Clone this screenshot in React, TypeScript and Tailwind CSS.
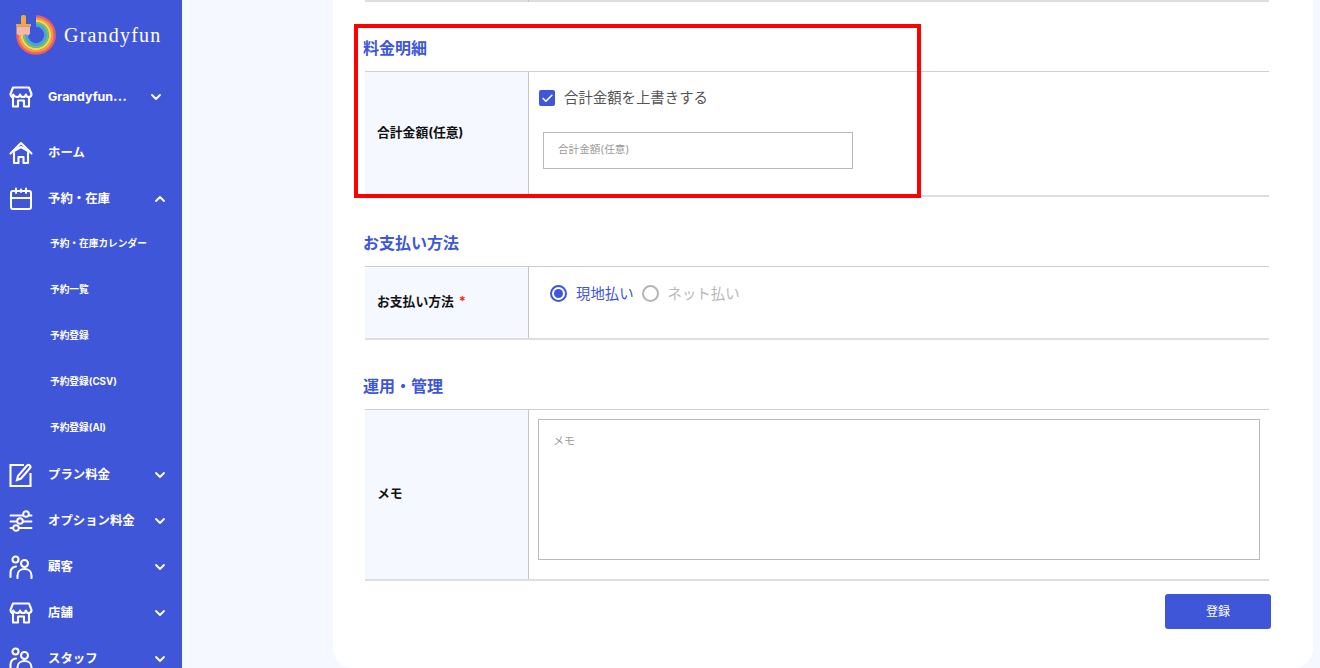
import type { ReactNode } from 'react';
import { ChevronDown, ChevronUp, Check } from 'lucide-react';

const jp = 'font-["Inter","Noto_Sans_CJK_JP",sans-serif]';

function Logo() {
  const rings = ['#f0596b', '#f59a3e', '#f7d64a', '#6cc36e', '#4aa3e0'];
  return (
    <svg width="44" height="44" viewBox="15 13 44 44" fill="none">
      {rings.map((c, i) => {
        const r = 18.6 - i * 2.3;
        return <path key={c} d={`M36 ${35 - r}A${r} ${r} 0 1 1 ${36 - r} 35`} stroke={c} strokeWidth="2.5" />;
      })}
      <rect x="21" y="15" width="5" height="10" rx="2" fill="#f2a83b" />
      <rect x="16" y="24" width="15" height="2.600" rx="0.500" fill="#f2a83b" />
      <path d="M16.500 26.600h13.500v7l-1.500 2-3-1-3 1-6-1z" fill="#f5b7a8" />
    </svg>
  );
}

function StoreIcon() {
  return (
    <svg width="24" height="24" viewBox="0 0 24 24" fill="none" stroke="white" strokeWidth="2.100" strokeLinejoin="round" strokeLinecap="round">
      <path d="M4 2.500h16l2.500 6.500c0 2-1.500 3-2.800 3s-2.600-1-2.800-2.500c-.2 1.500-1.600 2.500-2.900 2.500s-2.700-1-2.900-2.500C10.900 11 9.500 12 8.200 12S4.500 11 4.300 9.500C4 11 3.200 12 2.800 12 1.800 11.500 1.500 10 1.500 9z" />
      <path d="M4 12v9.500h5v-6h6v6h5V12" />
    </svg>
  );
}

function HomeIcon() {
  return (
    <svg width="24" height="24" viewBox="0 0 24 24" fill="none" stroke="white" strokeWidth="2.100" strokeLinejoin="round" strokeLinecap="round">
      <path d="M1.500 12.500 12 2l10.500 10.500" />
      <path d="M4 10.500 12 6l8 4.500" />
      <path d="M5 12v10h4.500v-6h5v6H19V12" />
    </svg>
  );
}

function CalendarIcon() {
  return (
    <svg width="24" height="24" viewBox="0 0 24 24" fill="none" stroke="white" strokeWidth="2" strokeLinecap="round" strokeLinejoin="round">
      <rect x="2" y="4" width="20" height="18" rx="2" />
      <path d="M2 11h20M7 1.500V6M12 2.500V5M17 1.500V6" />
    </svg>
  );
}

function EditIcon() {
  return (
    <svg width="24" height="24" viewBox="0 0 24 24" fill="none" stroke="white" strokeWidth="2.100" strokeLinejoin="miter">
      <path d="M15 2H1.500v21h20V10" />
      <path d="M8 17l1-4 9-10.500c1-.8 2-.8 2.800 0s.8 2 0 2.800L12 15.500z" />
    </svg>
  );
}

function SlidersIcon() {
  return (
    <svg width="24" height="24" viewBox="0 0 24 24" fill="none" stroke="white" strokeWidth="1.900" strokeLinecap="round">
      <path d="M1.500 6.500H14M20 6.500h2.500M1.500 12.500H8M14 12.500h8.500M1.500 19H4M10 19h12.500" />
      <circle cx="17" cy="5" r="2.800" />
      <circle cx="11" cy="12" r="2.800" />
      <circle cx="7" cy="19" r="2.800" />
    </svg>
  );
}

function PeopleIcon() {
  return (
    <svg width="24" height="24" viewBox="0 0 24 24" fill="none" stroke="white" strokeWidth="2.100" strokeLinecap="round">
      <circle cx="6.500" cy="4.500" r="3" />
      <circle cx="15.500" cy="8.500" r="3.500" />
      <path d="M1.500 22v-4c0-3.500 2-6 5.500-6.500" />
      <path d="M8.500 23v-2.500c0-4 3-6.500 7-6.500s7 2.500 7 6.500V23" />
    </svg>
  );
}

function NavRow({ icon, label, chevron, mt }: { icon: ReactNode; label: string; chevron?: 'up' | 'down'; mt?: string }) {
  return (
    <div className={`flex h-[46px] items-center pl-[9px] pr-[14px] shrink-0 ${mt ?? ''}`}>
      <span className="w-[24px] flex justify-center">{icon}</span>
      <span className="ml-[15px] flex-1 text-[12.400px] font-bold text-white whitespace-nowrap">{label}</span>
      {chevron === 'down' && <ChevronDown size={16} color="white" strokeWidth={2.800} />}
      {chevron === 'up' && <ChevronUp size={16} color="white" strokeWidth={2.800} />}
    </div>
  );
}

function SubRow({ label }: { label: string }) {
  return (
    <div className="flex h-[46px] items-center pl-[50px] pb-[1px] shrink-0 text-[9.700px] font-bold text-white whitespace-nowrap">
      {label}
    </div>
  );
}

function Sidebar() {
  return (
    <aside className="w-[182px] shrink-0 bg-[#4056d9] flex flex-col overflow-hidden">
      <div className="flex h-[70px] items-center pl-[15px] pb-[1px] shrink-0">
        <Logo />
        <span className='ml-[5px] text-[20px] tracking-[1.200px] text-white font-["Liberation_Serif",serif]'>Grandyfun</span>
      </div>
      <div className="flex h-[54px] items-center pl-[9px] pr-[18px] shrink-0">
        <span className="w-[24px] flex justify-center"><StoreIcon /></span>
        <span className="ml-[15px] flex-1 text-[12.400px] font-bold text-white whitespace-nowrap">
          Grandyfun<span className='font-["Noto_Sans_CJK_JP",sans-serif]'>…</span>
        </span>
        <ChevronDown size={16} color="white" strokeWidth={2.800} />
      </div>
      <NavRow icon={<HomeIcon />} label="ホーム" mt="mt-[6px]" />
      <NavRow icon={<CalendarIcon />} label="予約・在庫" chevron="up" />
      <SubRow label="予約・在庫カレンダー" />
      <SubRow label="予約一覧" />
      <SubRow label="予約登録" />
      <SubRow label="予約登録(CSV)" />
      <SubRow label="予約登録(AI)" />
      <NavRow icon={<EditIcon />} label="プラン料金" chevron="down" />
      <NavRow icon={<SlidersIcon />} label="オプション料金" chevron="down" />
      <NavRow icon={<PeopleIcon />} label="顧客" chevron="down" />
      <NavRow icon={<StoreIcon />} label="店舗" chevron="down" />
      <NavRow icon={<PeopleIcon />} label="スタッフ" chevron="down" />
    </aside>
  );
}

function SectionTitle({ children, h }: { children: ReactNode; h: string }) {
  return (
    <div className={`${h} flex items-end -ml-[2px] text-[16px] leading-[22px] font-semibold text-[#4056d9]`}>
      {children}
    </div>
  );
}

function FormRow({ label, required, h, children }: { label: string; required?: boolean; h: string; children: ReactNode }) {
  return (
    <div className={`${h} flex border-t border-t-[#cfcfcf] border-b-2 border-b-[#dedede]`}>
      <div className="w-[164px] shrink-0 bg-[#f5f8ff] border-r border-[#c4c4c4] flex items-center pl-[12px] pb-[1px] text-[12.800px] font-bold text-[#111]">
        {label}
        {required && <span className="ml-[5px] text-[#ef2b2b]">*</span>}
      </div>
      <div className="flex-1 min-w-0">{children}</div>
    </div>
  );
}

export default function App() {
  return (
    <div className={`relative flex h-[668px] w-[1320px] overflow-hidden bg-[#f5f8ff] ${jp}`}>
      <Sidebar />
      <main className="flex-1 pl-[151px] pr-[7px]">
        <div className="h-[668px] bg-white rounded-b-[20px] pl-[32px] pr-[44px]">
          <div className="flex h-[2px] bg-[#dedede]">
            <div className="ml-[163px] w-[1px] bg-[#c4c4c4]" />
          </div>
          <SectionTitle h="h-[57px]">料金明細</SectionTitle>
          <div className="h-[12px]" />
          <FormRow label="合計金額(任意)" h="h-[126px]">
            <div className="pl-[10px] pt-[17px] flex items-center">
              <span className="flex h-[16px] w-[16px] items-center justify-center rounded-[2px] bg-[#4056d9]">
                <Check size={13} color="white" strokeWidth={3} />
              </span>
              <span className="ml-[9px] text-[14.400px] leading-[18px] text-[#555]">合計金額を上書きする</span>
            </div>
            <div className="ml-[14px] mt-[25px] flex h-[37px] w-[310px] items-center border border-[#bababa] pl-[14px] pb-[1px] text-[10.600px] text-[#9a9a9a]">
              合計金額(任意)
            </div>
          </FormRow>
          <SectionTitle h="h-[57px]">お支払い方法</SectionTitle>
          <div className="h-[12px]" />
          <FormRow label="お支払い方法" required h="h-[74px]">
            <div className="flex items-center pl-[21px] pt-[16px] text-[14.400px]">
              <span className="flex h-[17px] w-[17px] items-center justify-center rounded-full border-2 border-[#4056d9]">
                <span className="h-[9px] w-[9px] rounded-full bg-[#4056d9]" />
              </span>
              <span className="ml-[9px] text-[#4056d9]">現地払い</span>
              <span className="ml-[8px] h-[17px] w-[17px] rounded-full border-2 border-[#b5b5b5]" />
              <span className="ml-[9px] text-[#b9b9b9]">ネット払い</span>
            </div>
          </FormRow>
          <SectionTitle h="h-[57px]">運用・管理</SectionTitle>
          <div className="h-[12px]" />
          <FormRow label="メモ" h="h-[172px]">
            <div className="mx-[9px] mt-[9px] h-[141px] border border-[#bababa] pl-[14px] pt-[13px] text-[11px] text-[#9a9a9a]">
              メモ
            </div>
          </FormRow>
          <div className="mt-[13px] flex justify-end -mr-[2px]">
            <button className="h-[35px] w-[106px] rounded-[3px] bg-[#4056d9] text-[12px] text-white">登録</button>
          </div>
        </div>
      </main>
      <div className="absolute left-[354px] top-[24px] h-[174px] w-[567px] border-4 border-[#f00]" />
    </div>
  );
}
